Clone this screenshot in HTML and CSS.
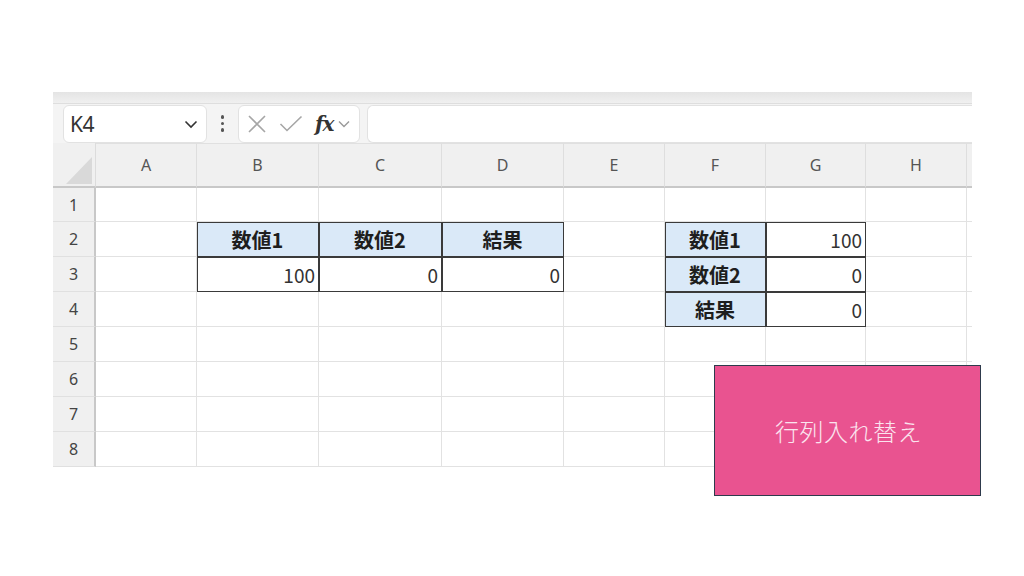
FILE: index.html
```html
<!DOCTYPE html>
<html lang="ja">
<head>
<meta charset="utf-8">
<title>Sheet</title>
<link rel="stylesheet" href="styles.css">
</head>
<body>
<div class="frame">
  <div class="strip"></div>
  <div class="fbar">
    <div class="namebox">
      <span class="ref">K4</span>
      <svg class="chev" width="14" height="9" viewBox="0 0 14 9"><path d="M1.5 1.5 L7 7 L12.5 1.5" fill="none" stroke="#333" stroke-width="1.6"/></svg>
    </div>
    <div class="dots"><i></i><i></i><i></i></div>
    <div class="fxbox">
      <svg class="ico" width="20" height="20" viewBox="0 0 20 20"><path d="M2 2 L18 18 M18 2 L2 18" stroke="#a6a6a6" stroke-width="1.6" fill="none"/></svg>
      <svg class="ico" width="24" height="20" viewBox="0 0 24 20"><path d="M1.5 10 L8 16.5 L22.5 2.5" stroke="#a6a6a6" stroke-width="1.6" fill="none"/></svg>
      <span class="fx">fx</span>
      <svg class="ico small" width="12" height="8" viewBox="0 0 12 8"><path d="M1 1.5 L6 6.5 L11 1.5" fill="none" stroke="#9a9a9a" stroke-width="1.4"/></svg>
    </div>
    <div class="input"></div>
  </div>
  <div class="grid">
    <div class="corner"><span class="tri"></span></div>
    <div class="ch">A</div><div class="ch">B</div><div class="ch">C</div><div class="ch">D</div><div class="ch">E</div><div class="ch">F</div><div class="ch">G</div><div class="ch">H</div><div class="ch end"></div>

    <div class="rh">1</div>
    <div class="c"></div><div class="c"></div><div class="c"></div><div class="c"></div><div class="c"></div><div class="c"></div><div class="c"></div><div class="c"></div><div class="c end"></div>

    <div class="rh">2</div>
    <div class="c"></div><div class="c th">数値1</div><div class="c th">数値2</div><div class="c th">結果</div><div class="c"></div><div class="c th">数値1</div><div class="c tv">100</div><div class="c"></div><div class="c end"></div>

    <div class="rh">3</div>
    <div class="c"></div><div class="c tv">100</div><div class="c tv">0</div><div class="c tv">0</div><div class="c"></div><div class="c th">数値2</div><div class="c tv">0</div><div class="c"></div><div class="c end"></div>

    <div class="rh">4</div>
    <div class="c"></div><div class="c"></div><div class="c"></div><div class="c"></div><div class="c"></div><div class="c th">結果</div><div class="c tv">0</div><div class="c"></div><div class="c end"></div>

    <div class="rh">5</div>
    <div class="c"></div><div class="c"></div><div class="c"></div><div class="c"></div><div class="c"></div><div class="c"></div><div class="c"></div><div class="c"></div><div class="c end"></div>

    <div class="rh">6</div>
    <div class="c"></div><div class="c"></div><div class="c"></div><div class="c"></div><div class="c"></div><div class="c"></div><div class="c"></div><div class="c"></div><div class="c end"></div>

    <div class="rh">7</div>
    <div class="c"></div><div class="c"></div><div class="c"></div><div class="c"></div><div class="c"></div><div class="c"></div><div class="c"></div><div class="c"></div><div class="c end"></div>

    <div class="rh">8</div>
    <div class="c"></div><div class="c"></div><div class="c"></div><div class="c"></div><div class="c"></div><div class="c"></div><div class="c"></div><div class="c"></div><div class="c end"></div>
  </div>
</div>
<div class="button">行列入れ替え</div>
</body>
</html>
```

FILE: styles.css
```css
* { box-sizing: border-box; }
html, body { margin: 0; padding: 0; background: #ffffff; }
body {
  font-family: "Noto Sans", "Noto Sans CJK JP", sans-serif;
  color: #222;
  position: relative;
  width: 1024px;
  height: 576px;
  overflow: hidden;
}
.frame {
  margin-left: 53px;
  padding-top: 92px;
  width: 919px;
}
.strip {
  height: 12px;
  background: linear-gradient(#e4e4e4, #f0f0f0);
  border-bottom: 1px solid #dedede;
}
.fbar {
  height: 39px;
  background: #f4f4f4;
  display: flex;
  align-items: center;
  padding-left: 10px;
}
.namebox {
  width: 144px;
  height: 38px;
  background: #fff;
  border: 1px solid #e2e2e2;
  border-radius: 6px;
  display: flex;
  align-items: center;
  justify-content: space-between;
  padding: 0 8px 0 6px;
}
.ref { font-size: 21px; color: #333; letter-spacing: -0.5px; }
.chev { margin-top: 2px; }
.dots {
  width: 31px;
  display: flex;
  flex-direction: column;
  align-items: center;
  gap: 3px;
}
.dots i {
  display: block;
  width: 3.5px;
  height: 3.5px;
  border-radius: 50%;
  background: #555;
}
.fxbox {
  width: 122px;
  height: 38px;
  background: #fff;
  border: 1px solid #e2e2e2;
  border-radius: 6px;
  display: flex;
  align-items: center;
  padding-left: 8px;
  gap: 0;
}
.fxbox .ico:nth-child(1) { margin-right: 12px; }
.fxbox .ico:nth-child(2) { margin-right: 12px; }
.fx {
  font-family: "DejaVu Serif", "Liberation Serif", serif;
  font-style: italic;
  font-weight: bold;
  font-size: 20px;
  color: #333;
  letter-spacing: -1px;
  margin-right: 4px;
  line-height: 1;
}
.ico.small { margin-top: 1px; }
.input {
  flex: 1;
  height: 38px;
  margin-left: 7px;
  background: #fff;
  border: 1px solid #e2e2e2;
  border-right: none;
  border-radius: 6px 0 0 6px;
}
.grid {
  display: grid;
  grid-template-columns: 43px 101px 122px 123px 122px 101px 101px 100px 101px 5px;
  grid-template-rows: 45px 34px repeat(7, 35px);
}
.corner {
  background: #f0f0f0;
  border-bottom: 2px solid #c8c8c8;
  border-right: 1px solid #dcdcdc;
  display: flex;
  align-items: flex-end;
  justify-content: flex-end;
  padding: 0 3px 2px 0;
}
.tri {
  width: 26px;
  height: 27px;
  background: #d9d9d9;
  clip-path: polygon(100% 0, 100% 100%, 0 100%);
}
.ch {
  background: #f0f0f0;
  border-top: 1px solid #e0e0e0;
  border-bottom: 2px solid #c8c8c8;
  border-right: 1px solid #dedede;
  display: flex;
  align-items: center;
  justify-content: center;
  font-size: 16px;
  color: #555;
}
.ch.end { border-right: none; }
.rh {
  background: #f0f0f0;
  border-right: 2px solid #c8c8c8;
  border-bottom: 1px solid #e0e0e0;
  display: flex;
  align-items: center;
  justify-content: center;
  font-size: 16px;
  color: #444;
}
.c {
  border-right: 1px solid #e2e2e2;
  border-bottom: 1px solid #e2e2e2;
  display: flex;
  align-items: center;
  font-family: "Noto Sans CJK JP", "Noto Sans", sans-serif;
}
.c.end { border-right: none; }
.th, .tv {
  border-right: 1px solid #3a3a3a;
  border-bottom: 1px solid #3a3a3a;
  box-shadow: inset 1px 1px 0 #3a3a3a;
}
.th {
  background: #dae9f8;
  justify-content: center;
  font-weight: bold;
  font-size: 20px;
  color: #1e1e1e;
}
.tv {
  justify-content: flex-end;
  font-size: 19px;
  color: #333;
  padding-right: 3px;
}
.button {
  position: absolute;
  left: 714px;
  top: 365px;
  width: 267px;
  height: 131px;
  background: #e95390;
  border: 1.5px solid #2e3a4c;
  display: flex;
  align-items: center;
  justify-content: center;
  font-family: "Noto Sans CJK JP", sans-serif;
  font-weight: 300;
  font-size: 24px;
  color: #fbe3ee;
  letter-spacing: 0.5px;
  padding-left: 2px;
}
```
